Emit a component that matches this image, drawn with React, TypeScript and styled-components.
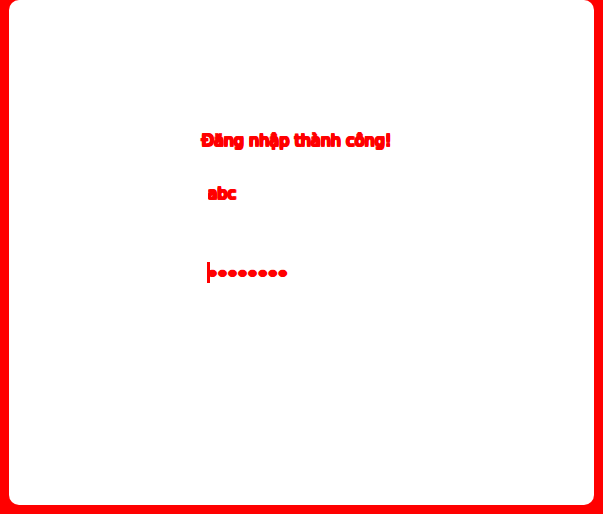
import React, { useState } from "react";
import styled, { createGlobalStyle, css } from "styled-components";

const GlobalStyle = createGlobalStyle`
  * { box-sizing: border-box; }
  html, body { margin: 0; background: #ff0000; }
  body { font-family: "DejaVu Sans", Verdana, sans-serif; }
`;

const heavyOutline = css`
  color: #ff0000;
  text-shadow:
    -1px -1px #ff0000, 0 -1px #ff0000, 1px -1px #ff0000,
    -1px 0 #ff0000, 1px 0 #ff0000,
    -1px 1px #ff0000, 0 1px #ff0000, 1px 1px #ff0000;
`;

const Page = styled.main`
  min-height: 100vh;
  display: flex;
  padding: 0 9px 9px;
  background: #ff0000;
`;

const Panel = styled.section`
  flex: 1;
  display: flex;
  justify-content: center;
  padding-top: 131px;
  background: #ffffff;
  border-radius: 10px;
`;

const Form = styled.form`
  width: 200px;
  display: flex;
  flex-direction: column;
`;

const Message = styled.h1`
  margin: 0 0 31px;
  font-size: 16px;
  line-height: 20px;
  font-weight: 400;
  white-space: nowrap;
  ${heavyOutline}
`;

const Field = styled.label<{ $caret?: boolean }>`
  display: flex;
  height: 21px;
  margin: 0 0 59px 5px;
  border-left: 3px solid ${(p) => (p.$caret ? "#ff0000" : "transparent")};
`;

const Input = styled.input`
  width: 100%;
  height: 21px;
  margin-left: -2px;
  padding: 2px 0 0;
  border: 0;
  outline: 0;
  background: transparent;
  font: 400 16px/19px "DejaVu Sans", Verdana, sans-serif;
  ${heavyOutline}

  &[type="password"] {
    font-size: 17px;
    text-shadow:
      -2px 0 #ff0000, 2px 0 #ff0000,
      -1px -1px #ff0000, 0 -1px #ff0000, 1px -1px #ff0000,
      -1px 1px #ff0000, 0 1px #ff0000, 1px 1px #ff0000;
  }
`;

export default function App() {
  const [username, setUsername] = useState("abc");
  const [password, setPassword] = useState("password");

  return (
    <>
      <GlobalStyle />
      <Page>
        <Panel>
          <Form onSubmit={(e) => e.preventDefault()}>
            <Message role="status">Đăng nhập thành công!</Message>
            <Field>
              <Input
                type="text"
                aria-label="Tên đăng nhập"
                value={username}
                onChange={(e) => setUsername(e.target.value)}
              />
            </Field>
            <Field $caret>
              <Input
                type="password"
                aria-label="Mật khẩu"
                value={password}
                onChange={(e) => setPassword(e.target.value)}
              />
            </Field>
          </Form>
        </Panel>
      </Page>
    </>
  );
}
